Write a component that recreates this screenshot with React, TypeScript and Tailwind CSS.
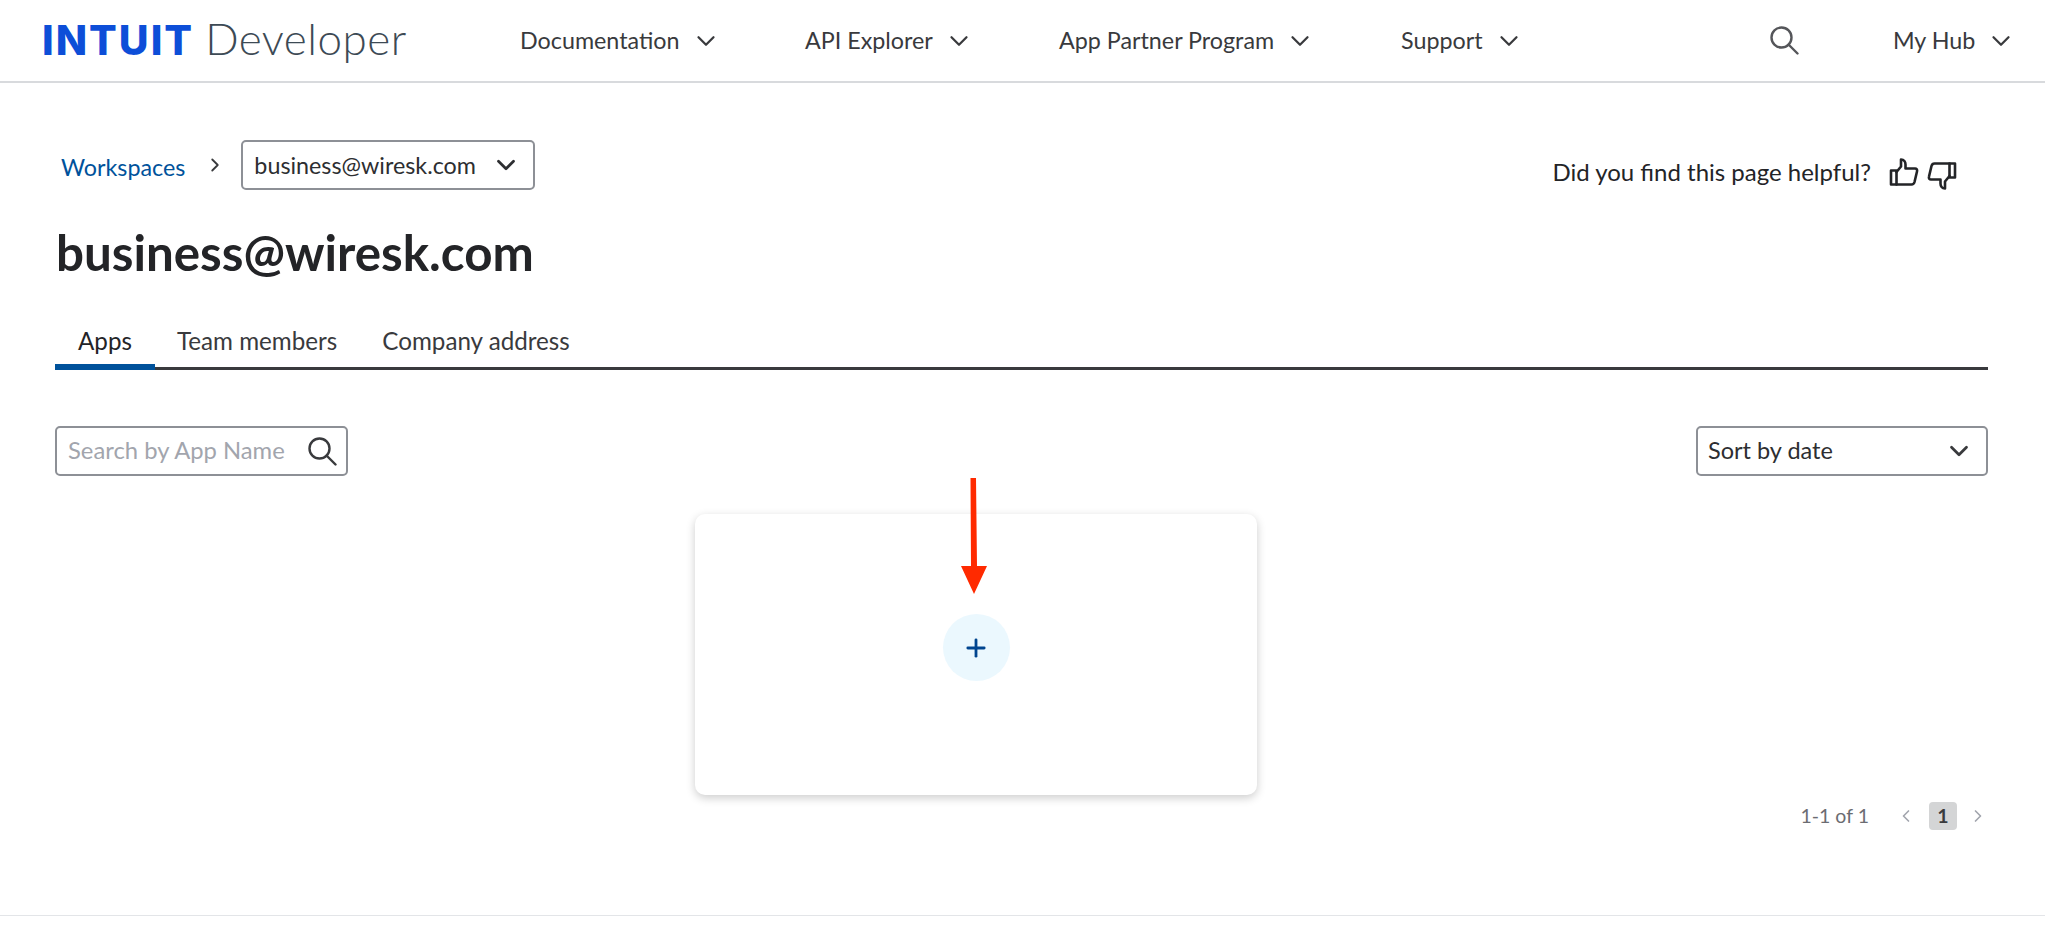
import React from 'react';
import { ChevronDown, ChevronLeft, ChevronRight, Plus } from 'lucide-react';

const NAV_ITEMS = [
  { name: 'Documentation', className: 'w-[285px]' },
  { name: 'API Explorer', className: 'w-[254px]' },
  { name: 'App Partner Program', className: 'w-[342px]' },
  { name: 'Support', className: 'w-[130px]' },
];

const SearchIcon = ({ color }: { color: string }) => (
  <svg width="29" height="29" viewBox="0 0 29 29" fill="none" stroke={color} strokeWidth="2.4" strokeLinecap="round">
    <circle cx="11.500" cy="11.500" r="10" />
    <path d="M18.500 18.500L27.500 27.500" />
  </svg>
);

const ThumbUp = () => (
  <svg width="30" height="30" viewBox="0 0 30 30" fill="none" stroke="#232427" strokeWidth="2.6" strokeLinejoin="round" strokeLinecap="round">
    <path d="M2 13.500h5.500v14H2z" />
    <path d="M7.500 15l4.500-5.500V2.500c3 0 4.500 2.500 4.500 5v4H26c1.500 0 2.500 1.200 2 3l-2.500 10.500c-.4 1.500-1.500 2.500-3 2.500H7.500" />
  </svg>
);

const ThumbDown = () => (
  <svg className="mt-[8px]" width="30" height="30" viewBox="0 0 30 30" fill="none" stroke="#232427" strokeWidth="2.6" strokeLinejoin="round" strokeLinecap="round">
    <path d="M28 2.500h-5.500v14H28z" />
    <path d="M22.500 15l-4.500 5.500v7c-3 0-4.500-2.500-4.500-5v-4H4c-1.500 0-2.500-1.200-2-3L4.500 5c.4-1.500 1.500-2.500 3-2.500h15" />
  </svg>
);

export default function App() {
  return (
    <div className="w-[2048px] h-[942px] overflow-hidden bg-white font-[Lato,sans-serif] text-[#393a3d]">
      <div className="w-[2045px] h-[916px] flex flex-col border-b border-[#e3e5e8]">
        {/* Header */}
        <header className="h-[83px] shrink-0 flex items-center border-b-2 border-[#d8dadd] pl-[42px]">
          <div className="w-[478px] flex items-center gap-[11px]">
            <span className="font-[Inter,sans-serif] font-extrabold text-[41px] leading-none tracking-[2px] text-[#0d4ed8]">INTUIT</span>
            <span className="font-light text-[44px] leading-none tracking-[0.5px] text-[#3d4a55] mt-[-5px]">Developer</span>
          </div>
          {NAV_ITEMS.map((item) => (
            <div key={item.name} className={`${item.className} flex items-center gap-[11px] text-[23.300px]`}>
              <span>{item.name}</span>
              <ChevronDown className="w-[30px] h-[30px]" strokeWidth={1.8} />
            </div>
          ))}
          <div className="ml-[239px] w-[123px]">
            <SearchIcon color="#55565a" />
          </div>
          <div className="flex items-center gap-[11px] text-[23.300px]">
            <span>My Hub</span>
            <ChevronDown className="w-[30px] h-[30px]" strokeWidth={1.8} />
          </div>
        </header>

        <main className="flex-1 relative pl-[55px] pr-[57px]">
          {/* Breadcrumb row */}
          <div className="pt-[56px] flex items-center">
            <span className="ml-[6px] mt-[6px] text-[23.300px] text-[#00529b] leading-none">Workspaces</span>
            <ChevronRight className="ml-[19px] w-[22px] h-[22px]" strokeWidth={2} />
            <div className="ml-[15px] w-[294px] h-[50px] flex items-center justify-between pl-[11px] pr-[12px] border-2 border-[#8d9096] rounded-[5px] text-[23.300px] text-[#2d2e31]">
              <span>business@wiresk.com</span>
              <ChevronDown className="w-[30px] h-[30px]" strokeWidth={2.2} />
            </div>
            <div className="ml-auto mr-[31px] mt-[14px] flex items-center gap-[18px] text-[24px] text-[#232427]">
              <span>Did you find this page helpful?</span>
              <div className="flex items-center gap-[8px]">
                <ThumbUp />
                <ThumbDown />
              </div>
            </div>
          </div>

          <h1 className="mt-[31px] ml-[1px] text-[49.300px] leading-[60px] font-bold text-[#232427]">business@wiresk.com</h1>

          {/* Tabs */}
          <div className="mt-[40px] flex h-[48px] border-b-[3px] border-[#393a3d] text-[24.200px]">
            <div className="w-[100px] h-[48px] shrink-0 border-b-[6px] border-[#00529b] text-center text-[#232427] leading-[38px]">Apps</div>
            <div className="ml-[22px] leading-[38px]">Team members</div>
            <div className="ml-[45px] leading-[38px]">Company address</div>
          </div>

          {/* Filters */}
          <div className="mt-[56px] flex items-center justify-between">
            <div className="w-[293px] h-[50px] flex items-center justify-between pl-[11px] pr-[9px] border-2 border-[#8d9096] rounded-[5px]">
              <span className="text-[23.800px] text-[#a2a5ad]">Search by App Name</span>
              <SearchIcon color="#393a3d" />
            </div>
            <div className="w-[292px] h-[50px] flex items-center justify-between pl-[10px] pr-[12px] border-2 border-[#8d9096] rounded-[5px]">
              <span className="text-[23.500px] text-[#2d2e31]">Sort by date</span>
              <ChevronDown className="w-[30px] h-[30px]" strokeWidth={2.2} />
            </div>
          </div>

          {/* App card */}
          <div className="mt-[38px] ml-[640px] w-[562px] h-[281px] rounded-[10px] bg-white shadow-[0_3px_10px_rgba(0,0,0,0.2)] flex justify-center pt-[100px]">
            <div className="w-[67px] h-[67px] rounded-full bg-[#ebf8fe] flex items-center justify-center">
              <Plus className="w-[28px] h-[28px] text-[#00458f]" strokeWidth={2.4} />
            </div>
          </div>

          {/* Annotation arrow */}
          <svg className="absolute left-[957px] top-[395px]" width="32" height="118" viewBox="0 0 32 118">
            <path d="M13.500 0h5.500l1 88h10L17 116 4 88h10z" fill="#ff2a00" />
          </svg>

          {/* Pagination */}
          <div className="absolute right-[57px] top-[718px] flex items-center text-[19.500px] text-[#6b6c72]">
            <span>1-1 of 1</span>
            <ChevronLeft className="ml-[27px] w-[20px] h-[20px] text-[#a2a5ad]" strokeWidth={2} />
            <div className="ml-[13px] w-[28px] h-[28px] rounded-[4px] bg-[#d4d5d6] flex items-center justify-center font-bold text-[#393a3d]">1</div>
            <ChevronRight className="ml-[11px] w-[20px] h-[20px] text-[#a2a5ad]" strokeWidth={2} />
          </div>
        </main>
      </div>
    </div>
  );
}
